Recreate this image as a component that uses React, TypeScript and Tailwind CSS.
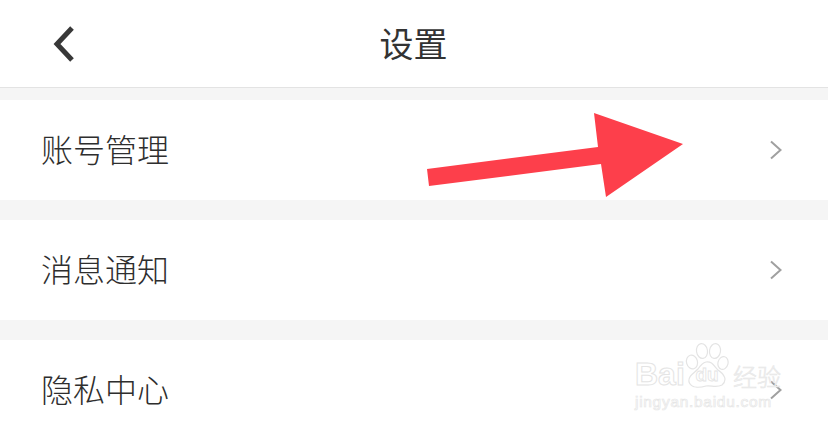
import React from "react";

const rows = ["账号管理", "消息通知", "隐私中心"];

const Chevron: React.FC = () => (
  <svg width="14" height="20" viewBox="0 0 14 20" fill="none" className="shrink-0">
    <path d="M2 1.5 L11.5 10 L2 18.5" stroke="#a0a0a0" strokeWidth="2" />
  </svg>
);

// big red annotation arrow drawn over the first row
const RedArrow: React.FC = () => (
  <svg width="260" height="90" viewBox="0 0 260 90" className="absolute left-[427px] top-[113px]">
    <polygon points="0,56 171,34 167,0 256,31 179,84 174,51 2,73" fill="#fd3f4b" />
  </svg>
);

const Paw: React.FC = () => (
  <div className="relative flex h-[47px] w-[44px] shrink-0 items-end justify-center pb-[3px]">
    <svg width="44" height="47" viewBox="0 0 44 47" fill="none" stroke="#e4e4e4" strokeWidth="1.2" className="absolute inset-0">
      <ellipse cx="7" cy="20" rx="5.5" ry="7" transform="rotate(-15 7 20)" />
      <ellipse cx="17" cy="9" rx="5.5" ry="7.5" transform="rotate(-8 17 9)" />
      <ellipse cx="30" cy="9" rx="5.5" ry="7.5" transform="rotate(8 30 9)" />
      <ellipse cx="38" cy="21" rx="5" ry="6.5" transform="rotate(15 38 21)" />
      <path d="M21 20 C27 19 29 24 33 28 C39 32 43 38 37 43 C31 46 26 43 21 44 C14 46 6 46 4 40 C3 34 9 31 13 27 C15 24 17 21 21 20Z" />
    </svg>
    <span className="relative text-[19px] leading-[22px] font-bold text-white [-webkit-text-stroke:0.8px_#e4e4e4] [font-family:'Liberation_Sans',sans-serif]">
      du
    </span>
  </div>
);

const Watermark: React.FC = () => (
  <div className="absolute left-[635px] top-[342px] flex w-[150px] flex-col gap-[2px]">
    <div className="flex items-end">
      <span className="w-[50px] text-[32px] leading-[30px] font-bold text-white [-webkit-text-stroke:1px_#e4e4e4] [font-family:'Liberation_Sans',sans-serif]">
        Bai
      </span>
      <Paw />
      <span className="ml-[4px] text-[24px] leading-[27px] font-light whitespace-nowrap text-[#f0f0f0] [-webkit-text-stroke:0.5px_#e6e6e6]">
        经验
      </span>
    </div>
    <span className="text-[15.5px] leading-[22px] tracking-[0.7px] whitespace-nowrap text-white [-webkit-text-stroke:0.7px_#e6e6e6] [font-family:'Liberation_Sans',sans-serif]">
      jingyan.baidu.com
    </span>
  </div>
);

export default function App() {
  return (
    <div className="relative h-[431px] w-[828px] overflow-hidden bg-[#f5f5f5] [font-family:'Noto_Sans_CJK_SC',sans-serif]">
      {/* Header */}
      <div className="relative flex h-[88px] items-center justify-center border-b border-[#e3e3e3] bg-white">
        <svg width="24" height="38" viewBox="0 0 24 38" fill="none" className="absolute left-[52px] top-[25px]">
          <path d="M20 3 L5 19 L20 35" stroke="#383838" strokeWidth="5" />
        </svg>
        <h1 className="pb-[2px] pr-[1px] text-[34px] leading-none font-normal text-[#333333]">设置</h1>
      </div>

      {/* Rows */}
      <div className="mt-3 flex flex-col gap-5">
        {rows.map((label) => (
          <div key={label} className="flex h-[100px] items-center justify-between bg-white pl-[41px] pr-[45px]">
            <span className="pb-1 text-[32px] leading-none font-light text-[#2e2e2e]">{label}</span>
            <Chevron />
          </div>
        ))}
      </div>

      <RedArrow />
      <Watermark />
    </div>
  );
}
